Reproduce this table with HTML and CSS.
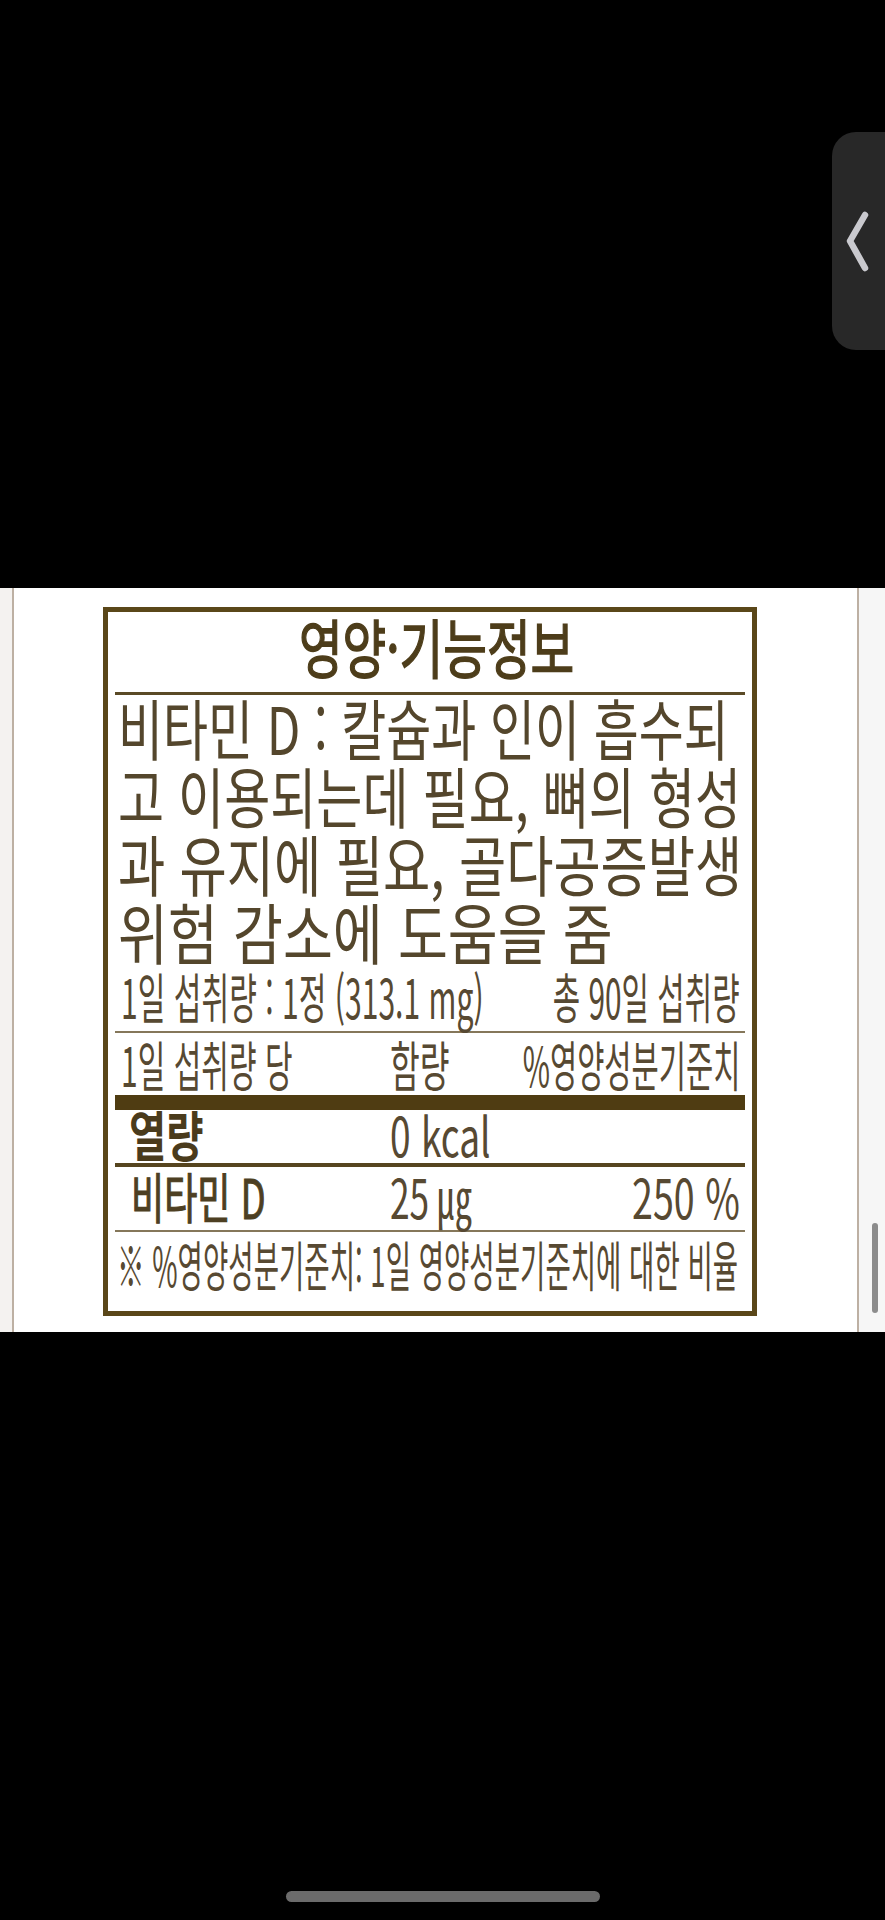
FILE: index.html
```html
<!DOCTYPE html>
<html lang="ko">
<head>
<meta charset="utf-8">
<title>영양·기능정보</title>
<link rel="stylesheet" href="styles.css">
</head>
<body>
<div class="screen">
  <div class="top-black">
    <div class="edge-tab">
      <svg class="chevron" width="53" height="218" viewBox="0 0 53 218">
        <polyline points="33,83 18,109 33,136" fill="none" stroke="#c9c9ce" stroke-width="6.5" stroke-linecap="round" stroke-linejoin="round"/>
      </svg>
    </div>
  </div>

  <section class="panel">
    <div class="gutter-left"></div>
    <div class="sheet">
      <div class="label">
        <div class="title"><span class="sx t-title">영양·기능정보</span></div>
        <div class="rule rule-title"></div>
        <div class="desc">
          <div class="line"><span class="sx l1">비타민 D : 칼슘과 인이 흡수되</span></div>
          <div class="line"><span class="sx l2">고 이용되는데 필요, 뼈의 형성</span></div>
          <div class="line"><span class="sx l3">과 유지에 필요, 골다공증발생</span></div>
          <div class="line"><span class="sx l4">위험 감소에 도움을 줌</span></div>
        </div>
        <div class="row row-a">
          <span class="cell cl a-l">1일 섭취량 : 1정 (313.1 mg)</span>
          <span class="cell cr a-r">총 90일 섭취량</span>
        </div>
        <div class="rule rule-thin"></div>
        <div class="row row-b">
          <span class="cell cl b-l">1일 섭취량 당</span>
          <span class="cell cm b-m">함량</span>
          <span class="cell cr b-r">%영양성분기준치</span>
        </div>
        <div class="rule rule-bar"></div>
        <div class="row row-c">
          <span class="cell cl c-l">열량</span>
          <span class="cell cm c-m">0 kcal</span>
        </div>
        <div class="rule rule-mid"></div>
        <div class="row row-d">
          <span class="cell cl d-l">비타민 D</span>
          <span class="cell cm d-m">25 ㎍</span>
          <span class="cell cr d-r">250 %</span>
        </div>
        <div class="rule rule-thin"></div>
        <div class="row row-foot">
          <span class="cell cl f-l">※ %영양성분기준치: 1일 영양성분기준치에 대한 비율</span>
        </div>
      </div>
    </div>
    <div class="gutter-right"><div class="scroll-thumb"></div></div>
  </section>

  <div class="bottom-black"><div class="home-bar"></div></div>
</div>
</body>
</html>
```

FILE: styles.css
```css
* { box-sizing: border-box; }

html, body {
  margin: 0;
  padding: 0;
  background: #000;
  overflow-x: hidden;
}

body {
  font-family: "Noto Sans CJK KR", "Noto Sans", sans-serif;
  color: #54462c;
}

.screen {
  position: relative;
  width: 885px;
  height: 1920px;
  background: #000;
}

/* ---------- top black area + edge handle ---------- */
.top-black {
  height: 588px;
  background: #000;
}

.edge-tab {
  position: absolute;
  top: 132px;
  right: 0;
  width: 53px;
  height: 218px;
  background: #282828;
  border-radius: 24px 0 0 24px;
}

.chevron { display: block; }

/* ---------- product panel ---------- */
.panel {
  display: flex;
  height: 744px;
  overflow: hidden;
}

.gutter-left {
  width: 12px;
  background: #f4f2f0;
}

.sheet {
  flex: 1;
  background: #fff;
  border-left: 2px solid #bdb0a3;
  border-right: 2px solid #bdb0a3;
  padding: 19px 0 0 89px;
}

.gutter-right {
  width: 26px;
  background: #f6f6f6;
  display: flex;
  flex-direction: column;
  justify-content: flex-end;
  padding: 0 0 19px 13px;
}

.scroll-thumb {
  width: 6px;
  height: 90px;
  border-radius: 3px;
  background: #8c8c8c;
}

/* ---------- nutrition label ---------- */
.label {
  width: 654px;
  height: 709px;
  border: 5px solid #5a4719;
  padding: 0 7px;
}

.sx {
  display: inline-block;
  white-space: nowrap;
  transform: scaleX(var(--sx, 1));
  transform-origin: left center;
}

.title {
  height: 80px;
  line-height: 66px;
  padding: 0 0 14px 14px;
  text-align: center;
  font-size: 64px;
  font-weight: 400;
  color: #4d3d1a;
}
.title .sx {
  transform-origin: center center;
  -webkit-text-stroke: 1.5px #4d3d1a;
}
.t-title { --sx: 0.742; }

.rule { width: 100%; }
.rule-title { height: 3px; background: #5a4a26; }
.rule-thin { height: 2px; background: #85775a; }
.rule-bar { height: 15px; background: #4f3c12; }
.rule-mid { height: 4px; background: #56451f; }

.desc {
  padding-left: 3px;
  font-size: 66px;
}
.line { height: 68px; line-height: 62px; }
.l1 { --sx: 0.741; }
.l2 { --sx: 0.759; }
.l3 { --sx: 0.778; }
.l4 { --sx: 0.822; }

.row {
  display: grid;
  grid-template-columns: minmax(0, 1fr);
  padding: 0 5px 0 6px;
  font-size: 54px;
  color: #574932;
}
.cell {
  grid-row: 1;
  grid-column: 1;
  white-space: nowrap;
  transform: scaleX(var(--sx, 1));
  transform-origin: left center;
}
.cl { justify-self: start; }
.cm { justify-self: start; margin-left: 269px; }
.cr { justify-self: end; transform-origin: right center; }

.row-a { height: 64px; line-height: 57px; }
.row-b { height: 62px; line-height: 61px; }
.row-c { height: 53px; line-height: 47px; }
.row-d { height: 63px; line-height: 57px; }
.row-foot { height: 79px; line-height: 63px; padding-left: 2px; }

.a-l { --sx: 0.557; }
.a-r { --sx: 0.552; }
.b-l { --sx: 0.556; }
.b-m { --sx: 0.60; }
.b-r { --sx: 0.548; }
.c-l { --sx: 0.75; font-weight: 700; margin-left: 8px; color: #4a3b1c; }
.c-m { --sx: 0.687; }
.d-l { --sx: 0.668; margin-left: 10px; color: #4d3f22; -webkit-text-stroke: 1.2px #4d3f22; }
.d-m { --sx: 0.653; }
.d-r { --sx: 0.696; }
.f-l { --sx: 0.51; }

/* ---------- bottom black + home indicator ---------- */
.bottom-black {
  height: 588px;
  padding-top: 559px;
}

.home-bar {
  width: 314px;
  height: 11px;
  margin: 0 auto;
  border-radius: 6px;
  background: #6b6b6b;
}
```
